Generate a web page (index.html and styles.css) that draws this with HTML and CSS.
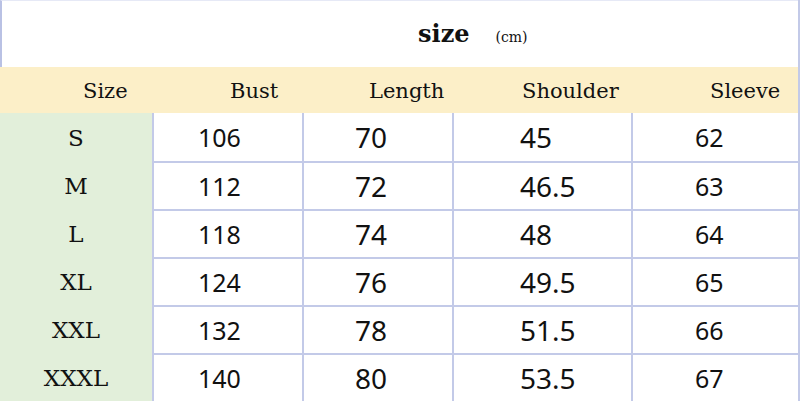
FILE: index.html
```html
<!DOCTYPE html>
<html>
<head>
<meta charset="utf-8">
<link rel="stylesheet" href="styles.css">
</head>
<body>
<div class="chart">
  <div class="title">
    <span class="title-main">size</span>
    <span class="title-unit">(cm)</span>
  </div>
  <div class="row head">
    <div class="hc h1">Size</div>
    <div class="hc h2">Bust</div>
    <div class="hc h3">Length</div>
    <div class="hc h4">Shoulder</div>
    <div class="hc h5">Sleeve</div>
  </div>
  <div class="body">
    <div class="row">
      <div class="size">S</div><div class="num c2">106</div><div class="num c3">70</div><div class="num c4">45</div><div class="num c5">62</div>
    </div>
    <div class="row">
      <div class="size">M</div><div class="num c2">112</div><div class="num c3">72</div><div class="num c4">46.5</div><div class="num c5">63</div>
    </div>
    <div class="row">
      <div class="size">L</div><div class="num c2">118</div><div class="num c3">74</div><div class="num c4">48</div><div class="num c5">64</div>
    </div>
    <div class="row">
      <div class="size">XL</div><div class="num c2">124</div><div class="num c3">76</div><div class="num c4">49.5</div><div class="num c5">65</div>
    </div>
    <div class="row">
      <div class="size">XXL</div><div class="num c2">132</div><div class="num c3">78</div><div class="num c4">51.5</div><div class="num c5">66</div>
    </div>
    <div class="row">
      <div class="size">XXXL</div><div class="num c2">140</div><div class="num c3">80</div><div class="num c4">53.5</div><div class="num c5">67</div>
    </div>
  </div>
</div>
</body>
</html>
```
FILE: styles.css
```css
html, body {
  margin: 0;
  padding: 0;
  background: #ffffff;
}
.chart {
  width: 800px;
  height: 401px;
  overflow: hidden;
  box-sizing: border-box;
  border-right: 2px solid #c3cae8;
  color: #111111;
}
.title {
  height: 67px;
  box-sizing: border-box;
  border-top: 1px solid #e6e9f6;
  border-left: 2px solid #b9c1e4;
  display: flex;
  align-items: baseline;
  padding-left: 416px;
  padding-top: 18px;
  font-family: "DejaVu Serif", serif;
}
.title-main {
  font-weight: bold;
  font-size: 24px;
}
.title-unit {
  font-size: 14px;
  margin-left: 26px;
}
.row {
  display: grid;
  grid-template-columns: 152px 150px 150px 179px 1fr;
  height: 48px;
}
.head {
  height: 46px;
  background: #fcefc8;
  font-family: "DejaVu Serif", serif;
  font-size: 21px;
  align-items: center;
}
.hc {
  padding-top: 2px;
}
.h1 { padding-left: 83px; }
.h2 { padding-left: 78px; }
.h3 { padding-left: 67px; }
.h4 { padding-left: 70px; }
.h5 { padding-left: 79px; }
.size {
  background: #e2efda;
  font-family: "DejaVu Serif", serif;
  font-size: 23px;
  display: flex;
  align-items: center;
  justify-content: center;
  padding-top: 2px;
}
.num {
  border-left: 2px solid #c3cae8;
  border-top: 2px solid #c3cae8;
  font-family: "Noto Sans", sans-serif;
  font-size: 25px;
  display: flex;
  align-items: center;
  color: #111111;
}
.body .row:first-child .num {
  border-top: none;
}
.c2 { padding-left: 44px; }
.c3 { padding-left: 51px; font-size: 28px; }
.c4 { padding-left: 66px; font-size: 28px; }
.c5 { padding-left: 62px; }
```
